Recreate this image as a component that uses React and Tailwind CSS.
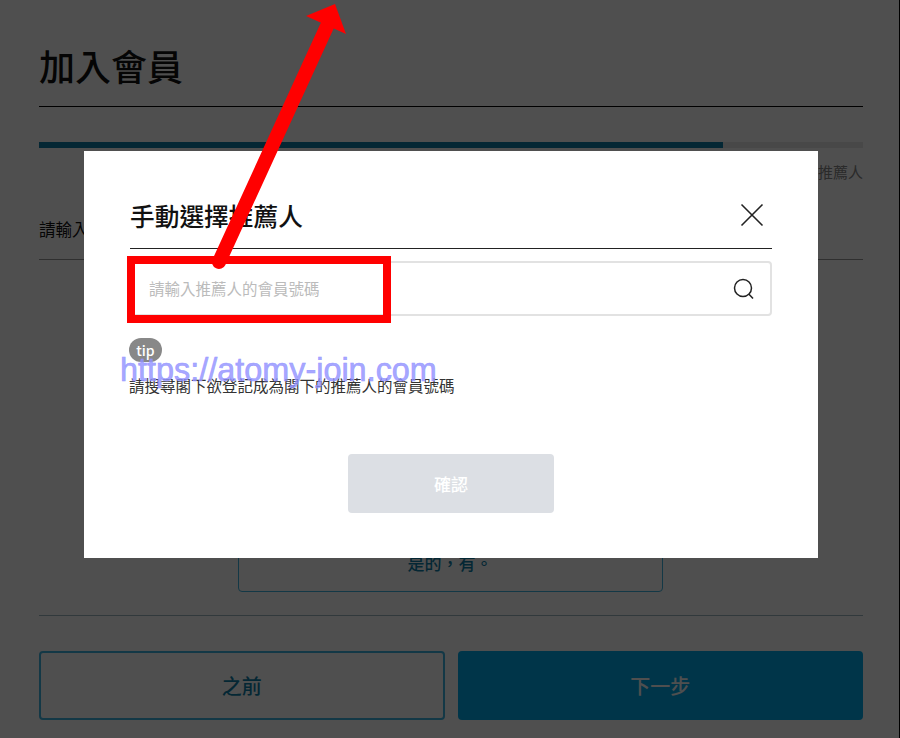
import React from "react";

const cjk = { fontFamily: '"Noto Sans CJK TC", "Noto Sans", sans-serif' };

const App = () => {
  return (
    <div style={cjk} className="relative h-[738px] w-[900px] overflow-hidden bg-white text-[#111]">
      {/* page behind the modal */}
      <div className="w-[900px] pl-[39px] pr-[37px]">
        <h1 className="h-[107px] border-b border-black pt-[40px] text-[36px] font-medium leading-[50px]">加入會員</h1>

        <div className="mt-[35px] h-[6px] bg-[#e8e8e8]">
          <div className="h-full w-[83%] bg-[#0f7fa8]" />
        </div>
        <p className="mt-[14px] text-right text-[15px] leading-[20px] text-[#888]">推薦人</p>

        <div className="mt-[35px] h-[43px] border-b border-[#999] text-[16.5px] leading-[24px]">請輸入推薦人</div>

        <div className="flex justify-center pt-[273px]">
          <button className="-ml-[2px] h-[59px] w-[425px] rounded-[4px] border border-[#3fb4e0] text-[17px] font-medium text-[#0f7fa8]">
            是的，有。
          </button>
        </div>

        <div className="mt-[23px] border-t border-[#9fb9c2]" />

        <div className="mt-[35px] grid grid-cols-2 gap-[13px]">
          <button className="h-[69px] rounded-[4px] border-2 border-[#3fb4e0] text-[20px] font-medium text-[#0f7fa8]">之前</button>
          <button className="h-[69px] rounded-[4px] bg-[#00abeb] text-[20px] font-medium text-white">下一步</button>
        </div>
      </div>

      {/* dim layer */}
      <div className="absolute inset-0 border-r border-black bg-black/[0.69]" />

      {/* modal */}
      <div className="absolute left-[84px] top-[151px] h-[407px] w-[734px] bg-white px-[46px]">
        <div className="flex h-[98px] items-center justify-between border-b border-[#222] pt-[30px]">
          <h2 className="text-[24.7px] font-medium leading-[36px] text-[#111]">手動選擇推薦人</h2>
          <svg width="24" height="24" viewBox="0 0 24 24" fill="none" stroke="#222" strokeWidth="1.6" className="mr-[8px]">
            <path d="M1.5 1.5 L22.5 22.5 M22.5 1.5 L1.5 22.5" />
          </svg>
        </div>

        <div className="mt-[12px] flex h-[55px] items-center justify-between rounded-[4px] border-2 border-[#e2e2e2] pl-[17px] pr-[15px]">
          <span className="pt-[1px] text-[15.5px] text-[#bbb]">請輸入推薦人的會員號碼</span>
          <svg width="22" height="22" viewBox="0 0 22 22" fill="none" stroke="#222" strokeWidth="1.5">
            <circle cx="10" cy="10" r="8.5" />
            <path d="M15.8 16 L20 20.5" />
          </svg>
        </div>

        <span className="mt-[22px] -ml-[1px] flex h-[24px] w-[33px] items-center justify-center rounded-full bg-[#888] text-[14px] font-medium text-white">tip</span>
        <p className="mt-[12px] -ml-[1px] text-[15.5px] leading-[22px] text-[#333]">請搜尋閣下欲登記成為閣下的推薦人的會員號碼</p>

        <div className="mt-[58px] flex justify-center">
          <button className="h-[59px] w-[206px] rounded-[4px] bg-[#dcdfe4] text-[17px] font-medium text-white">確認</button>
        </div>
      </div>

      {/* annotations pasted on top of the screenshot */}
      <div className="absolute left-[127px] top-[256px] h-[67px] w-[264px] border-[8px] border-[#ff0000]" />
      <svg className="absolute left-0 top-0" width="900" height="738" fill="none">
        <path d="M219 262 L328 24" stroke="#ff0000" strokeWidth="14" strokeLinecap="round" />
        <path d="M306 16 L335 4 L346 34 Z" fill="#ff0000" />
      </svg>
      <div
        style={{ fontFamily: '"Liberation Sans", Arial, sans-serif' }}
        className="absolute left-[120px] top-[351px] text-[32.4px] font-medium leading-[38px] text-[#8f8fff]/80 [-webkit-text-stroke:0.6px_#9a9aff]"
      >
        https://atomy-join.com
      </div>
    </div>
  );
};

export default App;
